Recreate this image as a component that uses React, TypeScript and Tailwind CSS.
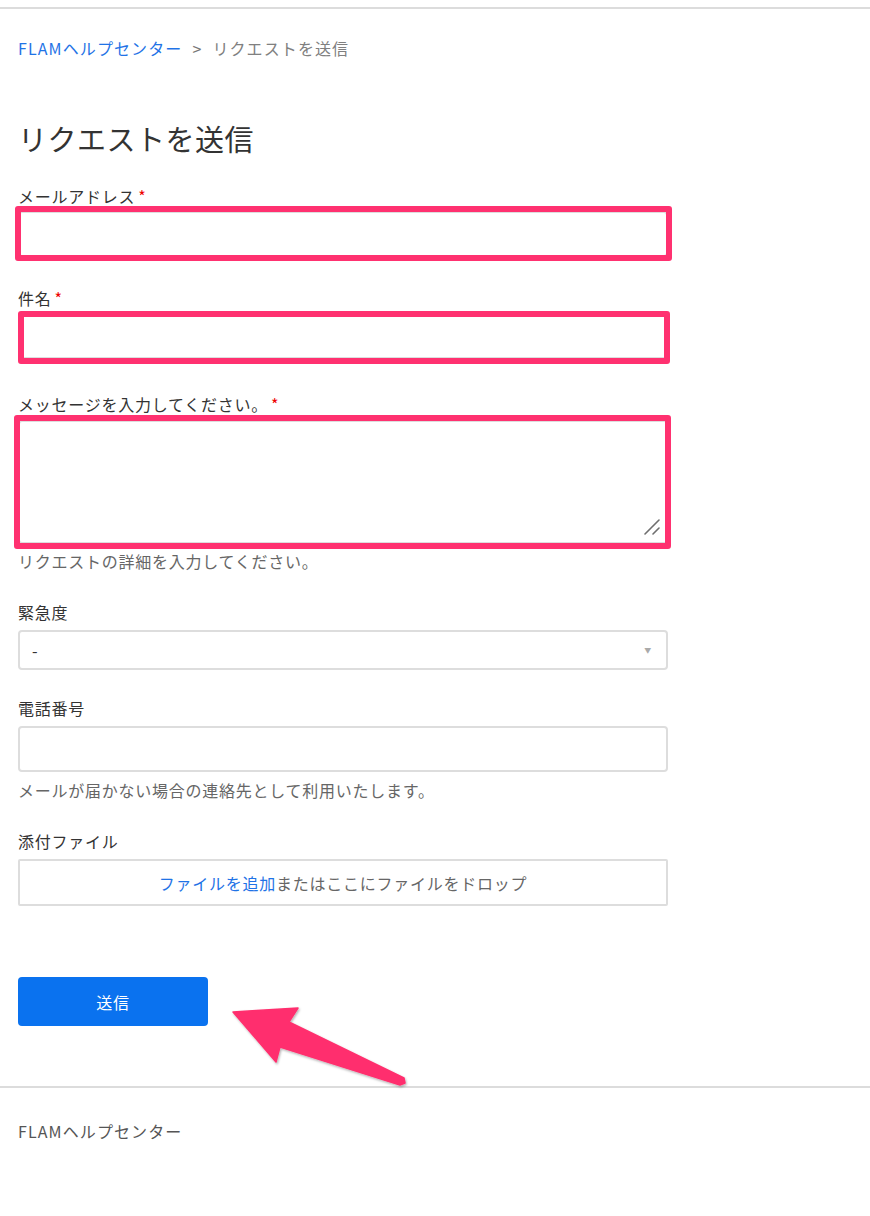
import React from 'react'

const font = {
  fontFamily: '"Noto Sans CJK JP", "Noto Sans", sans-serif',
  letterSpacing: '0.75px',
}

// pink callout frame drawn over a required field
const Callout = ({ className }: { className: string }) => (
  <div
    className={`pointer-events-none absolute rounded-[3px] border-[6px] border-[#ff3170] ${className}`}
  />
)

const Label = ({
  text,
  required,
  className = '',
}: {
  text: string
  required?: boolean
  className?: string
}) => (
  <label className={`block text-[16px] leading-[24px] text-[#333] ${className}`}>
    {text}
    {required && <span className="ml-[3px] text-[#e00]">*</span>}
  </label>
)

const ResizeGrip = () => (
  <svg
    className="pointer-events-none absolute bottom-[9px] right-[8px]"
    width="16"
    height="16"
    viewBox="0 0 16 16"
  >
    <path d="M1 15 L15 1 M9 15 L15 9" stroke="#6f6f6f" strokeWidth="1.6" strokeLinecap="round" />
  </svg>
)

const Arrow = () => (
  <svg
    className="pointer-events-none absolute left-[225px] top-[1000px]"
    width="190"
    height="95"
    viewBox="0 0 190 95"
  >
    <defs>
      <filter id="shadow" x="-10%" y="-10%" width="130%" height="130%">
        <feDropShadow dx="1" dy="1.5" stdDeviation="1.2" floodColor="#000" floodOpacity="0.3" />
      </filter>
    </defs>
    <polygon
      points="8,12 73,8 64,22 179,78 180,83 175,85 55,47 51,62"
      fill="#ff2f6e"
      strokeLinejoin="round"
      stroke="#ff2f6e"
      strokeWidth="1.5"
      filter="url(#shadow)"
    />
  </svg>
)

export default function App() {
  return (
    <div className="relative min-h-[1216px] bg-white" style={font}>
      <div className="h-[7px]" />
      <div className="h-[2px] bg-[#dcdcdc]" />

      <main className="px-[18px]">
        <nav className="mt-[27px] flex items-center text-[16px] leading-[24px] tracking-[1.1px]">
          <a className="text-[#1f73e6]">FLAMヘルプセンター</a>
          <span className="mx-[10px] text-[#777]">&gt;</span>
          <span className="text-[#808080]">リクエストを送信</span>
        </nav>

        <h1 className="mt-[60px] text-[29px] leading-[36px] tracking-[0.5px] text-[#333]">
          リクエストを送信
        </h1>

        <form className="w-[650px]" onSubmit={(e) => e.preventDefault()}>
          <Label text="メールアドレス" required className="mt-[28px]" />
          <div className="relative mt-[3px]">
            <input className="block h-[46px] w-full rounded-[4px] border-2 border-[#ddd] outline-none" />
            <Callout className="-top-[5px] -bottom-[4px] -left-[3px] -right-[4px]" />
          </div>

          <Label text="件名" required className="mt-[29px]" />
          <div className="relative mt-[3px]">
            <input className="block h-[46px] w-full rounded-[4px] border-2 border-[#ddd] outline-none" />
            <Callout className="-top-[2px] -bottom-[5px] left-0 -right-[2px]" />
          </div>

          <Label text="メッセージを入力してください。" required className="mt-[33px]" />
          <div className="relative mt-[4px]">
            <textarea className="block h-[124px] w-full resize-none rounded-[4px] border-2 border-[#ddd] outline-none" />
            <ResizeGrip />
            <Callout className="-top-[5px] -bottom-[5px] -left-[4px] -right-[3px]" />
          </div>
          <p className="mt-[5px] text-[16px] leading-[24px] text-[#666]">
            リクエストの詳細を入力してください。
          </p>

          <Label text="緊急度" className="mt-[27px]" />
          <div className="relative mt-[6px] flex h-[40px] items-center rounded-[4px] border-2 border-[#ddd] pl-[12px] pr-[14px]">
            <span className="text-[16px] text-[#333]">-</span>
            <span className="ml-auto text-[7px] text-[#aaa]">▼</span>
          </div>

          <Label text="電話番号" className="mt-[26px]" />
          <input className="mt-[6px] block h-[46px] w-full rounded-[4px] border-2 border-[#ddd] outline-none" />
          <p className="mt-[6px] text-[16px] leading-[24px] text-[#666]">
            メールが届かない場合の連絡先として利用いたします。
          </p>

          <Label text="添付ファイル" className="mt-[27px]" />
          <div className="mt-[6px] flex h-[47px] items-center justify-center rounded-[2px] border-2 border-[#ddd] text-[16px]">
            <a className="text-[#1f73e6]">ファイルを追加</a>
            <span className="text-[#666]">またはここにファイルをドロップ</span>
          </div>

          <button
            type="submit"
            className="mt-[71px] h-[49px] w-[190px] rounded-[4px] bg-[#0a72ef] text-[16px] text-white"
          >
            送信
          </button>
        </form>
      </main>

      <footer className="mt-[60px]">
        <div className="h-[2px] bg-[#dcdcdc]" />
        <p className="mt-[31px] px-[18px] text-[16px] leading-[24px] tracking-[1.1px] text-[#555]">
          FLAMヘルプセンター
        </p>
      </footer>

      <Arrow />
    </div>
  )
}
